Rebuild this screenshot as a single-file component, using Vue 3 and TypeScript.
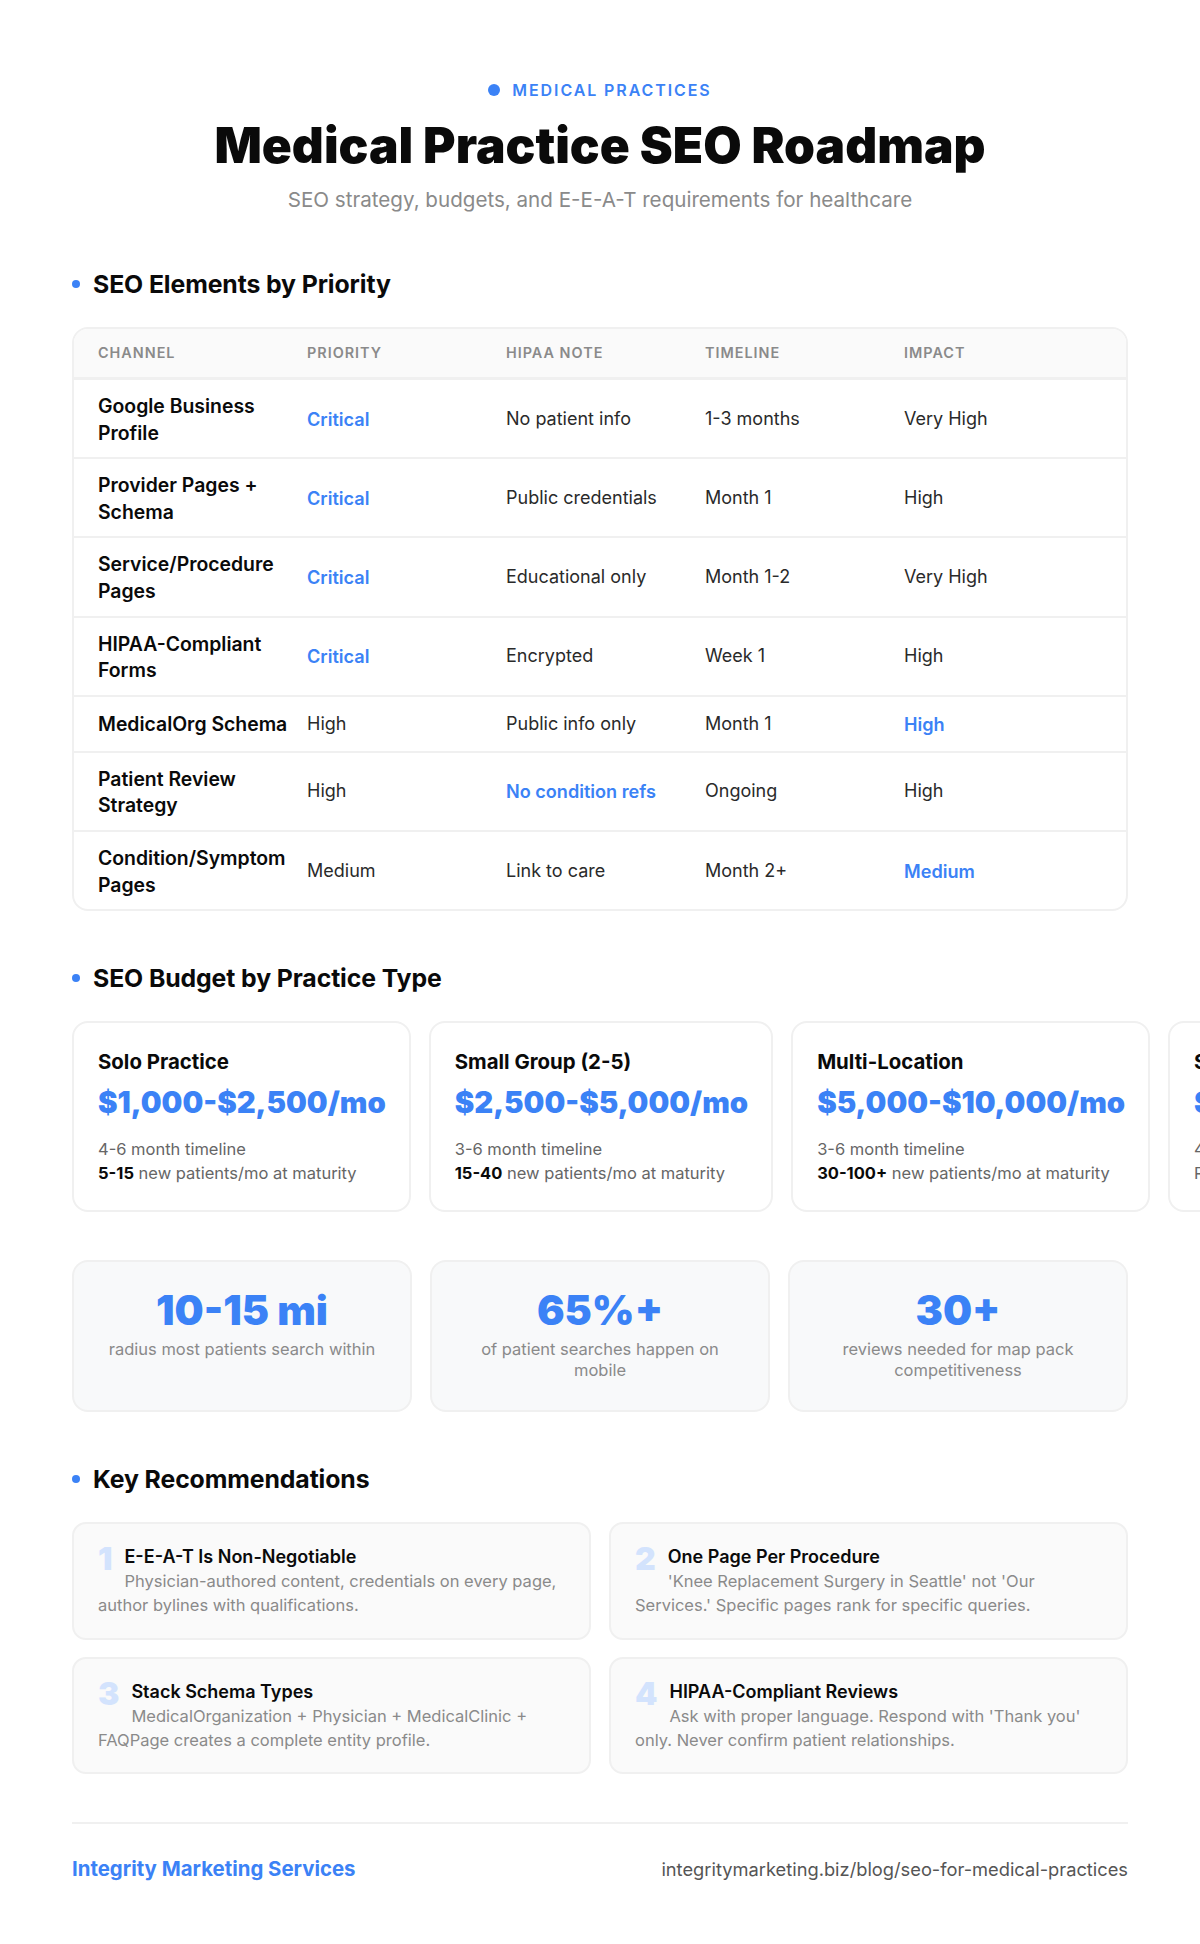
<template>
  <div class="page">
    <header class="hero">
      <div class="eyebrow"><span class="eyebrow-dot"></span>MEDICAL PRACTICES</div>
      <h1 class="title">Medical Practice SEO Roadmap</h1>
      <p class="subtitle">SEO strategy, budgets, and E-E-A-T requirements for healthcare</p>
    </header>

    <section class="section">
      <h2 class="section-title">SEO Elements by Priority</h2>
      <div class="table-wrap">
        <table class="table">
          <thead>
            <tr>
              <th v-for="col in columns" :key="col">{{ col }}</th>
            </tr>
          </thead>
          <tbody>
            <tr v-for="row in rows" :key="row.channel">
              <td class="channel">{{ row.channel }}</td>
              <td :class="{ accent: row.priority === 'Critical' }">{{ row.priority }}</td>
              <td :class="{ accent: row.accent === 'note' }">{{ row.note }}</td>
              <td>{{ row.timeline }}</td>
              <td :class="{ accent: row.accent === 'impact' }">{{ row.impact }}</td>
            </tr>
          </tbody>
        </table>
      </div>
    </section>

    <section class="section budget-section">
      <h2 class="section-title">SEO Budget by Practice Type</h2>
      <div class="budget-row">
        <div v-for="b in budgets" :key="b.name" class="budget-card">
          <div class="budget-name">{{ b.name }}</div>
          <div class="budget-price">{{ b.price }}</div>
          <div class="budget-meta">
            {{ b.timeline }}<br />
            <strong v-if="b.patients">{{ b.patients }}</strong> {{ b.result }}
          </div>
        </div>
      </div>
    </section>

    <div class="stats">
      <div v-for="s in stats" :key="s.value" class="stat">
        <div class="stat-value">{{ s.value }}</div>
        <div class="stat-label">{{ s.label }}</div>
      </div>
    </div>

    <section class="section recs-section">
      <h2 class="section-title">Key Recommendations</h2>
      <div class="recs">
        <div v-for="(r, i) in recs" :key="r.title" class="rec">
          <span class="rec-num">{{ i + 1 }}</span>
          <span class="rec-title">{{ r.title }}</span><br />
          <span class="rec-text">{{ r.text }}</span>
        </div>
      </div>
    </section>

    <footer class="footer">
      <span class="brand">Integrity Marketing Services</span>
      <span class="url">integritymarketing.biz/blog/seo-for-medical-practices</span>
    </footer>
  </div>
</template>

<script setup lang="ts">
interface Row {
  channel: string
  priority: string
  note: string
  timeline: string
  impact: string
  accent?: 'note' | 'impact'
}

const columns = ['CHANNEL', 'PRIORITY', 'HIPAA NOTE', 'TIMELINE', 'IMPACT']

const rows: Row[] = [
  { channel: 'Google Business Profile', priority: 'Critical', note: 'No patient info', timeline: '1-3 months', impact: 'Very High' },
  { channel: 'Provider Pages + Schema', priority: 'Critical', note: 'Public credentials', timeline: 'Month 1', impact: 'High' },
  { channel: 'Service/Procedure Pages', priority: 'Critical', note: 'Educational only', timeline: 'Month 1-2', impact: 'Very High' },
  { channel: 'HIPAA-Compliant Forms', priority: 'Critical', note: 'Encrypted', timeline: 'Week 1', impact: 'High' },
  { channel: 'MedicalOrg Schema', priority: 'High', note: 'Public info only', timeline: 'Month 1', impact: 'High', accent: 'impact' },
  { channel: 'Patient Review Strategy', priority: 'High', note: 'No condition refs', timeline: 'Ongoing', impact: 'High', accent: 'note' },
  { channel: 'Condition/Symptom Pages', priority: 'Medium', note: 'Link to care', timeline: 'Month 2+', impact: 'Medium', accent: 'impact' },
]

const budgets = [
  { name: 'Solo Practice', price: '$1,000-$2,500/mo', timeline: '4-6 month timeline', patients: '5-15', result: 'new patients/mo at maturity' },
  { name: 'Small Group (2-5)', price: '$2,500-$5,000/mo', timeline: '3-6 month timeline', patients: '15-40', result: 'new patients/mo at maturity' },
  { name: 'Multi-Location', price: '$5,000-$10,000/mo', timeline: '3-6 month timeline', patients: '30-100+', result: 'new patients/mo at maturity' },
  { name: 'Specialty Group', price: '$8,000-$20,000/mo', timeline: '4-8 month timeline', patients: '', result: 'Referral-driven growth' },
]

const stats = [
  { value: '10-15 mi', label: 'radius most patients search within' },
  { value: '65%+', label: 'of patient searches happen on mobile' },
  { value: '30+', label: 'reviews needed for map pack competitiveness' },
]

const recs = [
  { title: 'E-E-A-T Is Non-Negotiable', text: 'Physician-authored content, credentials on every page, author bylines with qualifications.' },
  { title: 'One Page Per Procedure', text: "'Knee Replacement Surgery in Seattle' not 'Our Services.' Specific pages rank for specific queries." },
  { title: 'Stack Schema Types', text: 'MedicalOrganization + Physician + MedicalClinic + FAQPage creates a complete entity profile.' },
  { title: 'HIPAA-Compliant Reviews', text: "Ask with proper language. Respond with 'Thank you' only. Never confirm patient relationships." },
]
</script>

<style>
html,
body {
  margin: 0;
  background: #fff;
}
</style>

<style scoped>
.page {
  width: 1200px;
  height: 1944px;
  box-sizing: border-box;
  padding: 80px 72px 0;
  overflow: hidden;
  font-family: Inter, "Liberation Sans", sans-serif;
  color: #0a0a0a;
}
.hero {
  text-align: center;
  margin-bottom: 53px;
}
.eyebrow {
  display: flex;
  align-items: center;
  justify-content: center;
  gap: 12px;
  font-size: 16px;
  line-height: 20px;
  font-weight: 600;
  letter-spacing: 1.9px;
  color: #3b82f6;
}
.eyebrow-dot {
  width: 12px;
  height: 12px;
  border-radius: 50%;
  background: #3b82f6;
}
.title {
  margin: 16px 0 11px;
  font-size: 49.6px;
  line-height: 58px;
  font-weight: 900;
}
.subtitle {
  margin: 0;
  font-size: 20.6px;
  line-height: 30px;
  color: #8a8a8a;
}
.section-title {
  position: relative;
  margin: 0 0 27px;
  padding-left: 21px;
  font-size: 24.8px;
  line-height: 32px;
  font-weight: 700;
  letter-spacing: -0.1px;
}
.section-title::before {
  content: "";
  position: absolute;
  left: 0;
  top: 12px;
  width: 8px;
  height: 8px;
  border-radius: 50%;
  background: #3b82f6;
}
.section {
  margin-bottom: 51px;
}
.budget-section {
  margin-bottom: 48px;
}
.recs-section {
  margin-bottom: 48px;
}
.table-wrap {
  border: 2px solid #f0f0f0;
  border-radius: 16px;
  overflow: hidden;
}
.table {
  width: 100%;
  border-collapse: collapse;
  table-layout: fixed;
}
.table th {
  width: 199px;
  box-sizing: border-box;
  text-align: left;
  padding: 14px 16px 14px 0;
  background: #fafafa;
  border-bottom: 3px solid #f0f0f0;
  font-size: 14.4px;
  line-height: 20px;
  font-weight: 600;
  letter-spacing: 1px;
  color: #8a8a8a;
}
.table th:first-child {
  width: 233px;
  padding-left: 24px;
}
.table th:last-child {
  width: auto;
}
.table td {
  padding: 12px 16px 12px 0;
  border-bottom: 2px solid #f0f0f0;
  font-size: 18px;
  line-height: 30px;
  color: #2a2a2a;
}
.table tbody tr:last-child td {
  border-bottom: 0;
}
.table td.channel {
  padding: 13px 16px 11px 24px;
  font-size: 19.4px;
  line-height: 26.6px;
  font-weight: 600;
  color: #0a0a0a;
}
.table td.accent {
  font-size: 18.1px;
  font-weight: 600;
  color: #3b82f6;
}
.budget-row {
  display: flex;
  gap: 18px;
  margin-right: -72px;
  overflow: hidden;
}
.budget-card {
  flex: none;
  box-sizing: border-box;
  padding: 25px 23px 24px 24px;
  border: 2px solid #f0f0f0;
  border-radius: 16px;
  height: 191px;
}
.budget-name {
  font-size: 20.4px;
  line-height: 28px;
  font-weight: 700;
}
.budget-price {
  margin: 5px 0 12px;
  font-size: 29.3px;
  line-height: 44px;
  font-weight: 900;
  color: #3b82f6;
  white-space: nowrap;
}
.budget-meta {
  font-size: 16.5px;
  line-height: 24px;
  color: #666;
  white-space: nowrap;
}
.budget-meta strong {
  color: #0a0a0a;
}
.stats {
  display: grid;
  grid-template-columns: repeat(3, 1fr);
  gap: 18px;
  margin-bottom: 51px;
}
.stat {
  box-sizing: border-box;
  height: 152px;
  padding: 24px 28px;
  text-align: center;
  background: #f8f9fa;
  border: 2px solid #f0f0f0;
  border-radius: 16px;
}
.stat-value {
  margin-bottom: 5px;
  font-size: 41px;
  line-height: 48px;
  font-weight: 900;
  color: #3b82f6;
}
.stat-label {
  font-size: 16.5px;
  line-height: 21px;
  color: #8a8a8a;
}
.recs {
  display: grid;
  grid-template-columns: 1fr 1fr;
  gap: 17px 18px;
}
.rec {
  box-sizing: border-box;
  height: 117.5px;
  padding: 21px 24px;
  background: #fafafa;
  border: 2px solid #f0f0f0;
  border-radius: 14px;
  font-size: 16.5px;
  line-height: 24px;
}
.rec-num {
  float: left;
  margin-right: 12px;
  font-size: 32px;
  line-height: 28px;
  font-weight: 900;
  color: #d3e3fd;
}
.rec-title {
  font-size: 18px;
  font-weight: 600;
  color: #0a0a0a;
}
.rec-text {
  color: #8a8a8a;
}
.footer {
  display: flex;
  justify-content: space-between;
  align-items: center;
  padding-top: 32px;
  border-top: 2px solid #f0f0f0;
}
.brand {
  font-size: 20.4px;
  font-weight: 700;
  color: #3b82f6;
}
.url {
  font-size: 18.3px;
  color: #555;
}
</style>
